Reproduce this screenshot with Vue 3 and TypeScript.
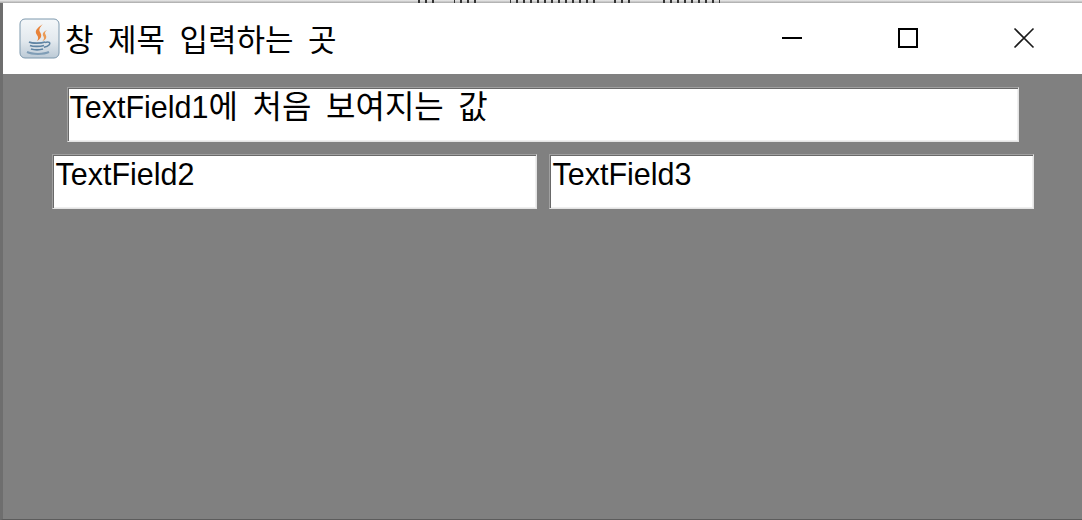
<script setup lang="ts">
const title = '창 제목 입력하는 곳'
const fieldName = 'TextField1'
const fieldValue = '에 처음 보여지는 값'
const rowFields = ['TextField2', 'TextField3']
</script>

<template>
  <div class="desktop">
    <div class="behind">
      <span class="behindTicks"></span>
    </div>
    <div class="window">
      <header class="titleBar">
        <svg class="javaIcon" width="42" height="42" viewBox="0 0 42 42">
          <defs>
            <linearGradient id="tile" x1="0" y1="0" x2="0" y2="1">
              <stop offset="0" stop-color="#f4f7f9" />
              <stop offset="0.55" stop-color="#e3e9ee" />
              <stop offset="1" stop-color="#bccad6" />
            </linearGradient>
          </defs>
          <rect x="1" y="1" width="39" height="39" rx="5" fill="url(#tile)" stroke="#7d98ad" />
          <path d="M24 6c-6 4-9 7-6 11 1.500 2 1.500 4 0 6 5-3 5-6 3-9-1.500-2.500 0-5 3-8z" fill="#e8833a" />
          <path d="M28 12c-4 2-5 4-3.500 6.500 1 1.500.5 3-1 4.500 4-1.500 4.500-4 3-6.500-1-1.500-.5-3 1.500-4.500z" fill="#ea9a55" />
          <path d="M10 24c3 1.500 12 1.500 16 0M11 27.500c3 1.200 10 1.200 14 0M12 31c3 1 9 1 12 0" fill="none" stroke="#5f84a3" stroke-width="1.800" />
          <path d="M26 24.500c4-1.500 6 .5 4 2.500-1 1-3 1.800-5 2.300" fill="none" stroke="#5f84a3" stroke-width="1.500" />
          <path d="M8 34c5 2.500 17 2.500 22 0" fill="none" stroke="#7f9db6" stroke-width="2" />
        </svg>
        <span class="titleText">{{ title }}</span>
        <div class="controls">
          <span class="control"><span class="minimize"></span></span>
          <span class="control"><span class="maximize"></span></span>
          <span class="control">
            <svg width="22" height="22" viewBox="0 0 22 22">
              <path d="M1.500 1.500l19 19M20.500 1.500l-19 19" stroke="#1a1a1a" stroke-width="1.600" fill="none" />
            </svg>
          </span>
        </div>
      </header>
      <main class="content">
        <div class="field wide">{{ fieldName }}<span class="fieldValue">{{ fieldValue }}</span></div>
        <div class="row">
          <div v-for="text in rowFields" :key="text" class="field half">{{ text }}</div>
        </div>
      </main>
    </div>
  </div>
</template>

<style>
html,
body {
  margin: 0;
  overflow: hidden;
}
</style>

<style scoped>
.desktop {
  width: 1082px;
  height: 520px;
  display: flex;
  flex-direction: column;
  background: #ffffff;
  font-family: "Liberation Sans", "Noto Sans CJK KR", sans-serif;
  overflow: hidden;
}
.behind {
  height: 3px;
  flex: none;
  background: linear-gradient(#ececec, #a8a8a8);
  overflow: hidden;
  padding-left: 418px;
}
.behindTicks {
  display: block;
  width: 310px;
  height: 3px;
  background: repeating-linear-gradient(90deg, #333333 0 2px, transparent 2px 7px);
  -webkit-mask-image: linear-gradient(
    90deg,
    #000 0 16px,
    transparent 16px 36px,
    #000 36px 60px,
    transparent 60px 92px,
    #000 92px 180px,
    transparent 180px 196px,
    #000 196px 212px,
    transparent 212px 242px,
    #000 242px 302px,
    transparent 302px
  );
  mask-image: linear-gradient(
    90deg,
    #000 0 16px,
    transparent 16px 36px,
    #000 36px 60px,
    transparent 60px 92px,
    #000 92px 180px,
    transparent 180px 196px,
    #000 196px 212px,
    transparent 212px 242px,
    #000 242px 302px,
    transparent 302px
  );
}
.window {
  flex: 1;
  display: flex;
  flex-direction: column;
  border-left: 3px solid #6e6e6e;
  border-bottom: 1px solid #5c5c5c;
  min-height: 0;
}
.titleBar {
  height: 71px;
  flex: none;
  display: flex;
  align-items: center;
  padding-left: 16px;
  background: #ffffff;
}
.javaIcon {
  flex: none;
}
.titleText {
  margin-left: 4px;
  margin-top: -3px;
  font-family: "Noto Sans CJK KR", sans-serif;
  font-size: 31px;
  word-spacing: 7.500px;
  color: #000000;
  white-space: pre;
}
.controls {
  margin-left: auto;
  display: flex;
  margin-top: -2px;
}
.control {
  width: 116px;
  height: 44px;
  display: flex;
  align-items: center;
  justify-content: center;
}
.minimize {
  width: 20px;
  height: 2px;
  background: #000000;
}
.maximize {
  width: 20px;
  height: 20px;
  box-sizing: border-box;
  border: 2px solid #000000;
}
.content {
  flex: 1;
  display: flex;
  flex-direction: column;
  align-items: center;
  gap: 12px;
  padding-top: 13px;
  background: #808080;
}
.row {
  display: flex;
  gap: 12px;
}
.field {
  box-sizing: border-box;
  height: 55px;
  padding: 1px 0 0 3px;
  background: #ffffff;
  border: 1px solid;
  border-color: #a0a0a0 #e3e3e3 #e3e3e3 #a0a0a0;
  box-shadow: inset 1px 1px 0 #696969, inset -1px -1px 0 #efefef;
  font-size: 30.500px;
  line-height: 36px;
  color: #000000;
  white-space: pre;
  overflow: hidden;
}
.wide {
  width: 952px;
  padding-left: 2px;
}
.fieldValue {
  font-size: 32px;
  word-spacing: 5.700px;
}
.half {
  width: 485px;
}
</style>
